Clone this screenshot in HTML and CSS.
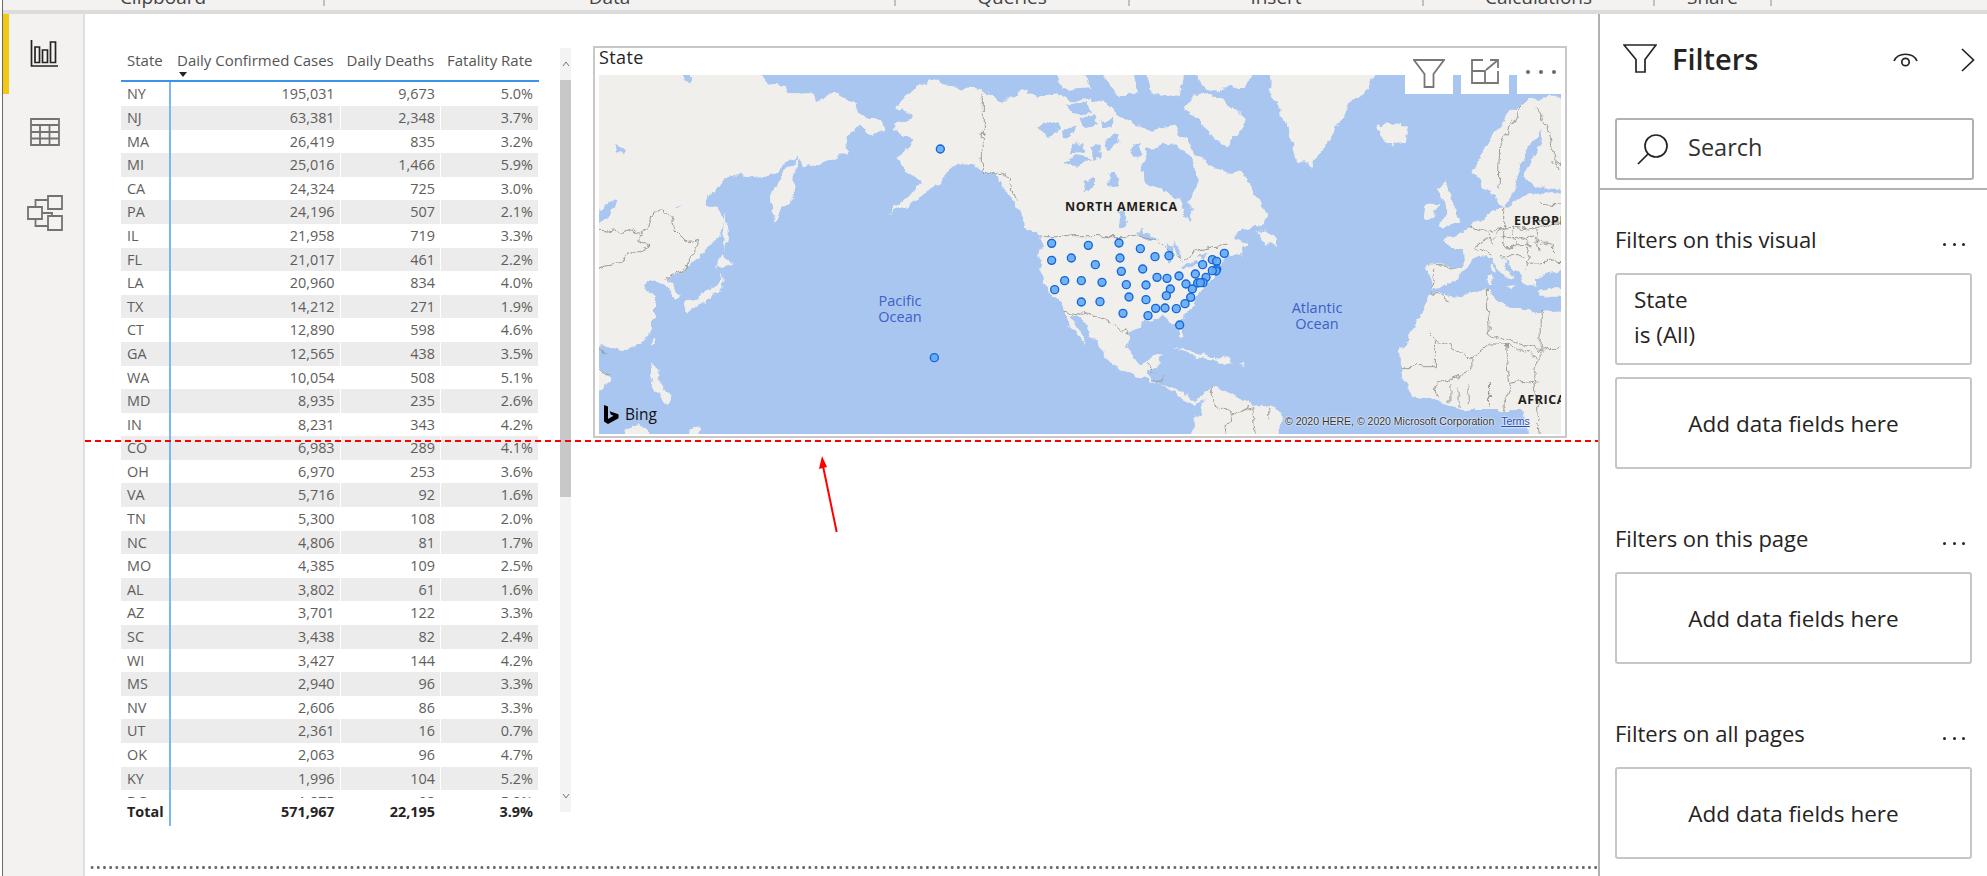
FILE: index.html
```html
<!DOCTYPE html>
<html lang="en">
<head>
<meta charset="utf-8">
<title>Power BI report</title>
<link rel="stylesheet" href="styles.css">
</head>
<body>
<div class="app">
  <div class="ribbon">
    <div class="groups">
      <div class="group g-clip"><span>Clipboard</span></div>
      <div class="group g-data"><span>Data</span></div>
      <div class="group g-query"><span>Queries</span></div>
      <div class="group g-insert"><span>Insert</span></div>
      <div class="group g-calc"><span>Calculations</span></div>
      <div class="group g-share"><span>Share</span></div>
    </div>
  </div>
  <div class="main">
    <nav class="sidebar">
      <div class="nav-item active">
        <svg width="28" height="27" viewBox="0 0 28 27"><path class="ic-dark" d="M1.500 0V26H28M5 7h4.500v15.500H5zM12.500 10h5v12.500h-5zM20.500 2h5v20.500h-5z"/></svg>
      </div>
      <div class="nav-item">
        <svg width="32" height="30" viewBox="0 0 32 30"><path class="ic-gray" d="M2 2h28v26H2zM2 8h28M2 15h28M2 21.500h28M11 8v20M20.500 8v20"/></svg>
      </div>
      <div class="nav-item">
        <svg width="36" height="36" viewBox="0 0 36 36"><path class="ic-gray" d="M21 1h14v13H21zM21 21h14v14H21zM1 12h14v12H1zM8.500 12V5H21M8.500 24v7H21M15 18h10v3"/></svg>
      </div>
    </nav>
    <main class="canvas">
      <div class="canvas-row">
        <section class="matrix">
          <div class="row head">
            <div class="hcell">State</div>
            <div class="hcell">Daily Confirmed Cases<i class="sort"></i></div>
            <div class="hcell">Daily Deaths</div>
            <div class="hcell">Fatality Rate</div>
          </div>
          <div class="rows">
            <div class="row"><span>NY</span><span>195,031</span><span>9,673</span><span>5.0%</span></div>
            <div class="row"><span>NJ</span><span>63,381</span><span>2,348</span><span>3.7%</span></div>
            <div class="row"><span>MA</span><span>26,419</span><span>835</span><span>3.2%</span></div>
            <div class="row"><span>MI</span><span>25,016</span><span>1,466</span><span>5.9%</span></div>
            <div class="row"><span>CA</span><span>24,324</span><span>725</span><span>3.0%</span></div>
            <div class="row"><span>PA</span><span>24,196</span><span>507</span><span>2.1%</span></div>
            <div class="row"><span>IL</span><span>21,958</span><span>719</span><span>3.3%</span></div>
            <div class="row"><span>FL</span><span>21,017</span><span>461</span><span>2.2%</span></div>
            <div class="row"><span>LA</span><span>20,960</span><span>834</span><span>4.0%</span></div>
            <div class="row"><span>TX</span><span>14,212</span><span>271</span><span>1.9%</span></div>
            <div class="row"><span>CT</span><span>12,890</span><span>598</span><span>4.6%</span></div>
            <div class="row"><span>GA</span><span>12,565</span><span>438</span><span>3.5%</span></div>
            <div class="row"><span>WA</span><span>10,054</span><span>508</span><span>5.1%</span></div>
            <div class="row"><span>MD</span><span>8,935</span><span>235</span><span>2.6%</span></div>
            <div class="row"><span>IN</span><span>8,231</span><span>343</span><span>4.2%</span></div>
            <div class="row"><span>CO</span><span>6,983</span><span>289</span><span>4.1%</span></div>
            <div class="row"><span>OH</span><span>6,970</span><span>253</span><span>3.6%</span></div>
            <div class="row"><span>VA</span><span>5,716</span><span>92</span><span>1.6%</span></div>
            <div class="row"><span>TN</span><span>5,300</span><span>108</span><span>2.0%</span></div>
            <div class="row"><span>NC</span><span>4,806</span><span>81</span><span>1.7%</span></div>
            <div class="row"><span>MO</span><span>4,385</span><span>109</span><span>2.5%</span></div>
            <div class="row"><span>AL</span><span>3,802</span><span>61</span><span>1.6%</span></div>
            <div class="row"><span>AZ</span><span>3,701</span><span>122</span><span>3.3%</span></div>
            <div class="row"><span>SC</span><span>3,438</span><span>82</span><span>2.4%</span></div>
            <div class="row"><span>WI</span><span>3,427</span><span>144</span><span>4.2%</span></div>
            <div class="row"><span>MS</span><span>2,940</span><span>96</span><span>3.3%</span></div>
            <div class="row"><span>NV</span><span>2,606</span><span>86</span><span>3.3%</span></div>
            <div class="row"><span>UT</span><span>2,361</span><span>16</span><span>0.7%</span></div>
            <div class="row"><span>OK</span><span>2,063</span><span>96</span><span>4.7%</span></div>
            <div class="row"><span>KY</span><span>1,996</span><span>104</span><span>5.2%</span></div>
            <div class="row"><span>DC</span><span>1,875</span><span>98</span><span>5.2%</span></div>
          </div>
          <div class="row total"><span>Total</span><span>571,967</span><span>22,195</span><span>3.9%</span></div>
        </section>
        <div class="scrollbar">
          <div class="sb-btn"><svg width="8" height="6" viewBox="0 0 8 6"><path class="chev" d="M1 5l3-4 3 4"/></svg></div>
          <div class="sb-thumb"></div>
          <div class="sb-track"></div>
          <div class="sb-btn-low"><svg width="8" height="6" viewBox="0 0 8 6"><path class="chev" d="M1 1l3 4 3-4"/></svg></div>
        </div>
        <section class="visual">
          <div class="visual-title">State</div>
          <div class="visual-actions">
            <div class="action"><svg width="32" height="29" viewBox="0 0 32 29"><path class="ic-mid" d="M1 1h30L20.500 15v13h-9V15z"/></svg></div>
            <div class="action"><svg width="28" height="25" viewBox="0 0 28 25"><path class="ic-mid" d="M12 1H1v23h26V12M1 12h13v12M15 11L27 1M19 1h8v8"/></svg></div>
            <div class="action more"><i></i><i></i><i></i></div>
          </div>
          <div class="map">
            <svg class="map-svg" width="962" height="359" viewBox="27 135 2886 1077">
              <defs>
                <filter id="rough" filterUnits="userSpaceOnUse" x="-60" y="60" width="3100" height="1240">
                  <feTurbulence type="fractalNoise" baseFrequency=".03" numOctaves="4" seed="7" result="n"/>
                  <feDisplacementMap in="SourceGraphic" in2="n" scale="30" xChannelSelector="R" yChannelSelector="G"/>
                  <feGaussianBlur stdDeviation="1.300"/>
                </filter>
              </defs>
              <g filter="url(#rough)">
                <g class="land">
                  <path d="M-20 90L270 90L285 155L300 160L300 90L490 90L530 160L580 165L590 190L660 190L690 210L730 190L790 225L830 265L870 270L880 295L850 325L800 290L770 320L775 370L710 390L640 420L625 368L590 400L560 430L520 440L420 435L380 475L340 520L385 535L405 575L385 610L350 660L300 705L265 730L235 745L275 800L250 810L225 765L190 745L160 765L195 800L195 860L165 930L90 962L45 945L-20 950Z"/>
                  <path d="M-20 975L60 1040L45 1080L-20 1090ZM632 368L610 420L615 490L575 540L555 582L540 520L550 480L590 420ZM405 545L415 600L405 665L398 610ZM398 675L432 700L400 715L380 705ZM392 730L398 775L350 810L290 845L285 822L345 790L385 760ZM190 925L195 945L180 950ZM185 1000L205 1010L205 1060L245 1105L235 1125L205 1090L180 1030ZM80 1260L110 1195L170 1190L200 1260ZM300 1190L330 1195L335 1260L295 1260Z"/>
                  <path d="M920 230L960 190L1020 150L1090 172L1175 180L1240 218L1300 180L1345 198L1400 190L1450 215L1500 205L1563 230L1623 280L1684 300L1745 290L1806 340L1816 380L1887 420L1958 430L2029 560L2009 590L1958 600L1928 625L1978 640L1948 680L1907 675L1902 690L1877 730L1836 780L1816 800L1796 850L1765 875L1786 920L1775 925L1760 880L1725 865L1664 870L1618 915L1613 960L1654 1000L1715 970L1705 1010L1674 1025L1684 1050L1755 1080L1816 1110L1867 1070L1877 1090L1816 1125L1765 1100L1705 1060L1644 1040L1573 1010L1512 930L1465 850L1440 860L1380 790L1345 720L1350 680L1360 620L1310 590L1280 530L1220 440L1180 415L1110 400L1070 430L1030 470L960 520L900 550L1000 460L940 420L925 380L970 330L915 305L910 285L970 260Z"/>
                  <g transform="translate(1380 0) scale(1.0142 1) translate(-1380 0)">
                    <path d="M1422 842L1440 850L1480 925L1490 945L1470 930L1440 890ZM1380 90L1470 90L1500 175L1420 180ZM1520 90L1620 90L1640 190L1570 200ZM1650 90L1780 90L1760 200L1680 190ZM1810 190L1880 200L1960 270L1940 310L1900 350L1850 310L1820 270L1780 230ZM1800 90L1990 90L1960 170L1840 180ZM1995 600L2040 610L2055 650L2015 635ZM1745 950L1810 965L1860 985L1900 995L1850 990L1790 970ZM1865 990L1905 985L1925 1000L1880 1005ZM1935 997L1955 997L1950 1003Z"/>
                    <path d="M1780 1260L1810 1170L1860 1070L1900 1090L1940 1100L1980 1125L2030 1130L2070 1150L2040 1260Z"/>
                    <path d="M2040 90L2030 180L2080 280L2110 390L2150 410L2210 320L2260 230L2320 180L2360 90ZM2345 290L2390 285L2440 290L2430 330L2390 350L2360 325ZM2530 470L2550 455L2570 510L2595 570L2560 590L2535 590L2555 540ZM2490 530L2525 520L2520 560L2485 565Z"/>
                    <path d="M2630 420L2690 320L2750 240L2790 205L2960 195L2960 725L2860 725L2810 745L2820 765L2790 770L2770 735L2710 680L2755 750L2730 745L2690 690L2640 680L2620 715L2560 760L2515 785L2490 725L2500 700L2600 710L2600 660L2540 630L2600 605L2660 565L2720 530L2665 470Z"/>
                    <path d="M2830 775L2960 775L2960 800L2830 800ZM2685 700L2695 705L2690 725L2682 720ZM2678 735L2692 735L2690 765L2678 765ZM2720 770L2755 765L2745 780Z"/>
                    <path d="M2510 790L2580 800L2670 780L2730 830L2810 850L2960 840L2960 1260L2800 1260L2780 1140L2600 1140L2510 1110L2450 1100L2420 1030L2415 960L2440 920L2480 850Z"/>
                  </g>
                </g>
                <g class="water">
                  <path d="M-20 590L70 510L80 515L65 545L30 580ZM75 345L100 350L105 370L85 365ZM250 525L270 525L260 535ZM1340 290L1400 270L1420 290L1370 320ZM1420 400L1460 375L1500 385L1460 410ZM1430 225L1490 215L1500 250L1450 250Z"/>
                  <g transform="translate(1380 0) scale(1.0142 1) translate(-1380 0)">
                    <path d="M1645 420L1670 350L1750 340L1810 400L1815 480L1795 510L1798 575L1780 560L1765 505L1720 480L1680 470Z"/>
                    <path d="M1630 608L1670 605L1705 625L1670 630ZM1725 640L1745 650L1742 700L1730 700ZM1740 635L1765 650L1765 690L1750 660ZM1765 715L1810 690L1820 700L1775 720ZM1810 680L1850 670L1845 685ZM1580 540L1600 540L1610 590L1590 590ZM1540 330L1580 310L1590 340L1550 360ZM1620 350L1650 330L1650 380L1625 385Z"/>
                    <path d="M1420 300L1445 290L1450 315L1425 320ZM1470 265L1510 255L1520 280L1480 290ZM1530 270L1570 260L1565 290L1535 295ZM1440 345L1475 335L1480 365L1445 370ZM1505 350L1530 345L1530 385L1505 385ZM1550 430L1575 425L1580 465L1555 470ZM1590 240L1640 235L1650 265L1600 270ZM1480 450L1510 445L1510 475L1480 480ZM1650 220L1700 230L1690 260L1655 250ZM1720 240L1760 250L1770 280L1730 275Z"/>
                    <path d="M2725 520L2750 490L2760 430L2805 340L2830 300L2835 340L2780 440L2810 470L2885 470L2960 480L2810 490L2775 500L2730 530ZM2860 725L2960 715L2960 770L2865 765Z"/>
                  </g>
                </g>
                <g class="borders">
                  <path d="M-20 595L60 600L90 610L130 600L150 610L180 590L185 550L215 545L245 560L255 600L290 635L325 630L320 660L295 680L295 710L230 745M-20 720L95 700L100 680L150 660L180 650L140 630L150 610M-20 1000L60 1030M-20 945L45 965M1177 195L1177 415L1215 440L1240 430L1285 510"/>
                  <g transform="translate(1380 0) scale(1.0142 1) translate(-1380 0)">
                    <path d="M1360 617L1630 617L1690 625L1770 690L1810 665L1860 650L1900 645M1420 840L1500 855L1550 870L1615 915M1665 1000L1690 1030M1690 1050L1720 1040"/>
                    <path d="M1860 1070L1860 1120L1920 1150L1980 1130M1980 1130L1990 1260M1920 1150L1880 1260M2030 1130L2030 1170"/>
                    <path d="M2510 790L2560 810M2670 780L2680 910L2830 960L2960 955M2520 925L2625 990L2680 945L2730 945L2825 980M2500 905L2520 925L2520 1010L2415 1010M2625 990L2625 1020L2520 1060L2530 1110M2730 945L2740 1060L2720 1140M2830 840L2830 980L2810 1050L2740 1060M2590 1075L2590 1130M2620 1060L2620 1125M2680 1060L2680 1130M2810 1050L2840 1260M2560 1060L2560 1120"/>
                    <path d="M2725 530L2725 590L2640 650L2690 680M2620 590L2670 610L2725 590L2790 600L2880 580L2960 520M2710 620L2780 620L2860 640L2875 670M2780 620L2800 680L2780 720M2725 650L2810 650M2710 680L2780 680M2725 590L2725 650M2500 705L2600 712M2515 720L2510 780M2705 480L2710 350L2780 210M2820 230L2860 320L2880 420M2960 380L2860 400M2830 520L2960 530M2780 560L2960 590M2800 700L2960 690M2670 610L2690 640M2750 590L2760 650M2820 600L2830 660"/>
                  </g>
                </g>
              </g>
              <g class="pins">
                <circle cx="1051" cy="357" r="12"/><circle cx="1033" cy="983" r="12"/>
                <circle cx="1385" cy="640" r="12"/><circle cx="1495" cy="646" r="12"/><circle cx="1587" cy="639" r="12"/><circle cx="1651" cy="656" r="12"/><circle cx="1695" cy="680" r="12"/><circle cx="1737" cy="677" r="12"/><circle cx="1903" cy="670" r="12"/>
                <circle cx="1385" cy="691" r="12"/><circle cx="1444" cy="684" r="12"/><circle cx="1516" cy="704" r="12"/><circle cx="1590" cy="684" r="12"/><circle cx="1594" cy="724" r="12"/><circle cx="1658" cy="717" r="12"/><circle cx="1701" cy="742" r="12"/><circle cx="1731" cy="745" r="12"/><circle cx="1767" cy="738" r="12"/>
                <circle cx="1838" cy="704" r="12"/><circle cx="1867" cy="689" r="12"/><circle cx="1880" cy="694" r="12"/><circle cx="1880" cy="717" r="12"/><circle cx="1878" cy="723" r="12"/><circle cx="1867" cy="722" r="12"/><circle cx="1816" cy="732" r="12"/><circle cx="1848" cy="742" r="12"/><circle cx="1839" cy="758" r="12"/><circle cx="1823" cy="759" r="12"/><circle cx="1831" cy="758" r="12"/><circle cx="1788" cy="762" r="12"/><circle cx="1807" cy="777" r="12"/><circle cx="1741" cy="777" r="12"/>
                <circle cx="1424" cy="752" r="12"/><circle cx="1474" cy="752" r="12"/><circle cx="1536" cy="757" r="12"/><circle cx="1394" cy="779" r="12"/><circle cx="1609" cy="764" r="12"/><circle cx="1668" cy="765" r="12"/><circle cx="1474" cy="816" r="12"/><circle cx="1530" cy="815" r="12"/><circle cx="1617" cy="801" r="12"/><circle cx="1668" cy="809" r="12"/><circle cx="1729" cy="797" r="12"/><circle cx="1802" cy="802" r="12"/><circle cx="1785" cy="821" r="12"/><circle cx="1759" cy="836" r="12"/><circle cx="1725" cy="834" r="12"/><circle cx="1697" cy="835" r="12"/><circle cx="1599" cy="850" r="12"/><circle cx="1674" cy="857" r="12"/><circle cx="1769" cy="885" r="12"/>
              </g>
            </svg>
            <span class="lbl continent na">NORTH AMERICA</span>
            <span class="lbl continent eu">EUROPE</span>
            <span class="lbl continent af">AFRICA</span>
            <span class="lbl ocean pac">Pacific<br>Ocean</span>
            <span class="lbl ocean atl">Atlantic<br>Ocean</span>
            <div class="bing">
              <svg width="15" height="19" viewBox="0 0 15 19"><path class="bing-b" d="M0 0l4 1.500V14l5.500-3.200-2.700-1.200-1.300-3.400L14.500 9.200v4L4 19 0 16.500z"/></svg>
              <span>Bing</span>
            </div>
            <div class="copyright">© 2020 HERE, © 2020 Microsoft Corporation<a class="terms">Terms</a></div>
          </div>
        </section>
      </div>
      <div class="page-end"></div>
      <div class="guide"></div>
      <svg class="arrow" width="24" height="78" viewBox="0 0 24 78"><path class="arrow-line" d="M21.700 76L8 10"/><path class="arrow-head" d="M7 0l5 11-8 2z"/></svg>
    </main>
    <aside class="filters">
      <header class="f-head">
        <svg class="f-funnel" width="34" height="29" viewBox="0 0 34 29"><path class="ic-dark" d="M1 1h32L22 15.500V28h-9V15.500z"/></svg>
        <h1 class="f-title">Filters</h1>
        <svg class="f-eye" width="25" height="16" viewBox="0 0 25 16"><path class="ic-dark" d="M1 9C5 0 20 0 24 9"/><circle class="ic-dark" cx="12.500" cy="10" r="3.700"/></svg>
        <svg class="f-chev" width="14" height="24" viewBox="0 0 14 24"><path class="ic-dark" d="M1 1l11.500 11L1 23"/></svg>
      </header>
      <div class="search">
        <svg width="31" height="31" viewBox="0 0 31 31"><circle class="ic-dark" cx="19" cy="12" r="11"/><path class="ic-dark" d="M11 20L1 30"/></svg>
        <span>Search</span>
      </div>
      <div class="f-rule"></div>
      <div class="f-section first">
        <div class="f-heading"><span>Filters on this visual</span><span class="dots"><i></i><i></i><i></i></span></div>
        <div class="f-card state"><div>State</div><div>is (All)</div></div>
        <div class="f-card add second">Add data fields here</div>
      </div>
      <div class="f-section">
        <div class="f-heading"><span>Filters on this page</span><span class="dots"><i></i><i></i><i></i></span></div>
        <div class="f-card add">Add data fields here</div>
      </div>
      <div class="f-section">
        <div class="f-heading"><span>Filters on all pages</span><span class="dots"><i></i><i></i><i></i></span></div>
        <div class="f-card add">Add data fields here</div>
      </div>
    </aside>
  </div>
</div>
</body>
</html>
```
FILE: styles.css
```css
* { box-sizing: border-box; }
html, body { margin: 0; padding: 0; background: #fff; }
body { width: 1987px; height: 876px; overflow: hidden; font-family: "Open Sans", "Noto Sans", sans-serif; color: #252423; }
.app { margin-left: 2px; height: 876px; border-left: 1px solid #6a6a6a; display: flex; flex-direction: column; }

.ribbon { height: 14px; flex: none; background: #f3f2f1; border-bottom: 4px solid #dcdcdc; overflow: hidden; }
.groups { display: flex; height: 6px; }
.group { height: 6px; flex: none; border-right: 2px solid #c2c0be; font-size: 19px; line-height: 20px; color: #444; display: flex; align-items: flex-start; justify-content: center; }
.group span { margin-top: -13px; white-space: nowrap; }
.g-clip { width: 322px; } .g-data { width: 571px; } .g-query { width: 234px; } .g-insert { width: 294px; } .g-calc { width: 231px; } .g-share { width: 117px; }

.main { flex: 1; display: flex; min-height: 0; }
.sidebar { width: 82px; flex: none; background: #f3f2f1; border-right: 2px solid #e1dfdd; display: flex; flex-direction: column; }
.nav-item { height: 78px; display: flex; align-items: flex-start; justify-content: center; padding: 23px 0 0 4px; }
.nav-item.active { height: 80px; border-left: 6px solid #f2c811; padding: 26px 4px 0 0; }
.ic-dark, .ic-gray, .ic-mid { fill: none; }
.ic-dark { stroke: #252423; stroke-width: 1.700; }
.ic-gray { stroke: #747371; stroke-width: 1.800; }
.ic-mid { stroke: #777; stroke-width: 1.800; }

.canvas { flex: 1; min-width: 0; position: relative; display: flex; flex-direction: column; padding-top: 32px; overflow: hidden; }
.canvas-row { display: flex; align-items: flex-start; padding-left: 36px; }
.matrix { width: 418px; flex: none; margin-top: 2px; font-size: 14.400px; color: #605e5c; }
.row { display: grid; grid-template-columns: 50px 169.600px 100.400px 98px; height: 23.600px; line-height: 23.600px; }
.row span { text-align: right; padding-right: 5px; border-right: 1px solid #fff; white-space: nowrap; }
.row span:first-child { text-align: left; padding-left: 6px; border-right: 2px solid #7ab8f5; }
.row.head { height: 34.400px; border-bottom: 2px solid #3a93e6; color: #555; font-size: 15px; }
.hcell { padding: 3px 0 0 6px; line-height: 18px; white-space: nowrap; }
.sort { display: block; width: 0; height: 0; margin: 3px 0 0 2px; border-left: 4.500px solid transparent; border-right: 4.500px solid transparent; border-top: 5px solid #252423; }
.rows { height: 715.600px; overflow: hidden; }
.rows .row:nth-child(even) { background: #ececec; }
.row.total { height: 24px; line-height: 28px; font-weight: 700; color: #252423; }

.scrollbar { width: 11px; height: 764px; margin: 2px 0 0 21px; flex: none; background: #f3f3f3; display: flex; flex-direction: column; }
.sb-btn { height: 32px; display: flex; align-items: center; justify-content: center; }
.sb-thumb { height: 417px; background: #c8c8c8; }
.sb-track { flex: 1; }
.sb-btn-low { height: 26px; display: flex; justify-content: center; align-items: flex-start; padding-top: 7px; }
.chev { fill: none; stroke: #777; stroke-width: 1; }

.visual { width: 974px; height: 392px; flex: none; margin-left: 22px; border: 2px solid #c8c8c8; position: relative; background: #fff; }
.visual-title { height: 27px; padding-left: 4px; font-size: 18px; line-height: 18px; letter-spacing: .4px; color: #252423; }
.visual-actions { position: absolute; top: 0; right: 4px; display: flex; gap: 8px; z-index: 3; }
.action { width: 48px; height: 46px; background: #fff; display: flex; align-items: flex-start; justify-content: center; padding-top: 11px; }
.action.more { width: 44px; gap: 8.700px; padding: 22px 0 0 4px; }
.action.more i { width: 4px; height: 4px; border-radius: 50%; background: #6a6a6a; }
.map { width: 962px; height: 359px; margin-left: 4px; position: relative; overflow: hidden; background: #a9c6f0; }
.map-svg { display: block; }
.land { fill: #f1efeb; }
.water { fill: #a9c6f0; }
.borders { fill: none; stroke: #98968f; stroke-width: 2.800; }
.pins circle { fill: #62aaf8; fill-opacity: .9; stroke: #1266d8; stroke-width: 4; }
.lbl { position: absolute; white-space: nowrap; }
.continent { font-size: 12.500px; font-weight: 700; color: #1e1e1e; letter-spacing: .6px; line-height: 14px; }
.na { left: 466px; top: 125px; }
.eu { left: 915px; top: 139px; }
.af { left: 919px; top: 318px; }
.ocean { font-size: 14.500px; line-height: 16px; color: #3d5fc7; text-align: center; }
.pac { left: 271px; top: 218px; width: 60px; }
.atl { left: 678px; top: 225px; width: 80px; }
.bing { position: absolute; left: 5px; bottom: 10px; display: flex; align-items: center; gap: 6px; font-size: 15.500px; line-height: 20px; color: #111; }
.bing-b { fill: #000; }
.copyright { position: absolute; left: 686px; top: 340px; font-family: "Liberation Sans", Arial, sans-serif; font-size: 10.500px; line-height: 12px; color: #333; white-space: nowrap; text-shadow: 0 0 2px #fff, 0 0 2px #fff; }
.terms { margin-left: 7px; color: #2b4bb5; text-decoration: underline; }

.page-end { margin-top: auto; margin-bottom: 7px; margin-left: 4px; height: 3px; background-image: radial-gradient(circle at center, #666 1.200px, transparent 1.700px); background-size: 6.200px 3px; background-repeat: repeat-x; }
.guide { position: absolute; left: 0; right: 0; top: 426px; height: 2px; background: repeating-linear-gradient(90deg, #f00 0 6px, transparent 6px 10px); z-index: 5; }
.arrow { position: absolute; left: 730px; top: 442px; z-index: 5; }
.arrow-line { fill: none; stroke: #f00; stroke-width: 2; }
.arrow-head { fill: #f00; }

.filters { width: 389px; flex: none; border-left: 2px solid #b3b0ad; background: #fff; }
.f-head { height: 90px; margin-bottom: 14px; display: flex; align-items: center; padding: 0 12px 0 23px; }
.f-funnel { margin-top: -1px; }
.f-title { margin: 0 0 0 15px; font-size: 29px; font-weight: 600; line-height: 38px; color: #252423; }
.f-eye { margin-left: auto; margin-top: 2px; }
.f-chev { margin-left: 43px; margin-top: 2px; }
.search { margin-left: 15px; width: 359px; height: 62px; border: 2px solid #b3b0ad; border-radius: 3px; display: flex; align-items: center; padding-left: 20px; gap: 20px; font-size: 23.500px; color: #323130; }
.search span { padding-bottom: 4px; }
.f-rule { margin-top: 8px; height: 2px; background: #b3b0ad; }
.f-section { margin: 55px 0 0 15px; }
.f-section.first { margin-top: 35px; }
.f-heading { display: flex; justify-content: space-between; align-items: center; width: 350px; height: 30px; margin-bottom: 18px; font-size: 22px; line-height: 28px; color: #252423; }
.f-heading > span:first-child { margin-top: -2px; }
.dots { display: flex; gap: 6.500px; margin-top: 9px; }
.dots i { width: 3px; height: 3px; border-radius: 50%; background: #252423; }
.f-card { width: 357px; height: 92px; border: 2px solid #c8c6c4; border-radius: 3px; font-size: 22.500px; color: #252423; }
.f-card.state { padding: 7px 0 0 17px; line-height: 35px; }
.f-card.add { display: flex; align-items: center; justify-content: center; }
.f-card.second { margin-top: 12px; }
```
